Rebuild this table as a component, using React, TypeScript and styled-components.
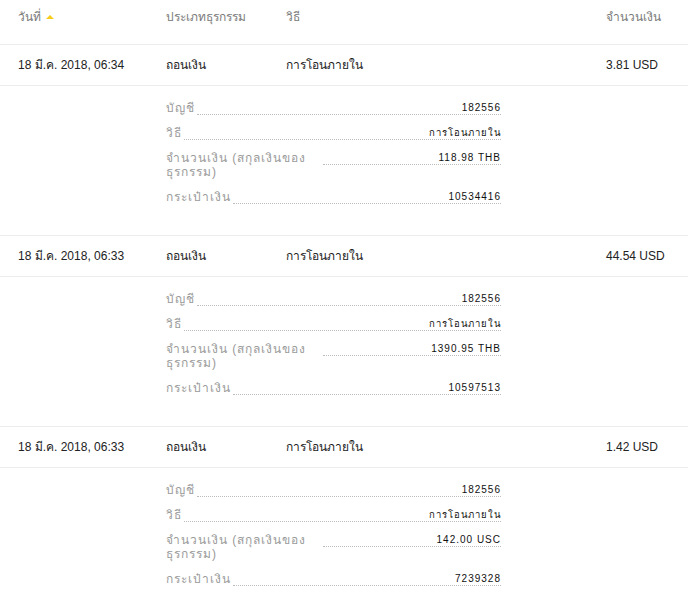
import React from "react";
import styled, { createGlobalStyle } from "styled-components";

const Global = createGlobalStyle`
  html, body { margin: 0; padding: 0; background: #fff; }
  body { font-family: "Liberation Sans", Arial, sans-serif; }
`;

const Table = styled.div`
  width: 688px;
  background: #fff;
`;

const Grid = styled.div`
  display: grid;
  grid-template-columns: 148px 120px 320px 1fr;
  padding-left: 18px;
  border-bottom: 1px solid #ececec;
  box-sizing: border-box;
`;

const HeaderRow = styled(Grid)`
  height: 45px;
  padding-top: 10px;
  align-items: start;
`;

const HeadCell = styled.div`
  font-size: 12px;
  line-height: 14px;
  color: #7a7a7a;
  display: flex;
  align-items: center;
  gap: 5px;
`;

const SortArrow = styled.span`
  width: 0;
  height: 0;
  border-left: 4px solid transparent;
  border-right: 4px solid transparent;
  border-bottom: 4px solid #f7cc1a;
  margin-top: -1px;
`;

const MainRow = styled(Grid)`
  height: 41px;
  align-items: center;
`;

const Cell = styled.div`
  font-size: 12px;
  line-height: 14px;
  color: #222;
`;

const Details = styled.div`
  border-bottom: 1px solid #ececec;
  padding: 15px 0 31px 166px;
`;

const DetailList = styled.div`
  width: 335px;
  display: flex;
  flex-direction: column;
  gap: 11px;
`;

const DetailRow = styled.div`
  display: flex;
  align-items: flex-start;
  gap: 2px;
`;

const Label = styled.div`
  max-width: 155px;
  font-size: 12px;
  line-height: 14px;
  letter-spacing: 1px;
  color: #9a9a9a;
`;

const Leader = styled.div<{ $thai?: boolean }>`
  flex: 1;
  height: 14px;
  box-sizing: border-box;
  border-bottom: 1px dotted #bdbdbd;
  text-align: right;
  font-size: ${(p) => (p.$thai ? "9.5px" : "10px")};
  line-height: 13px;
  letter-spacing: 1px;
  color: #111;
  white-space: nowrap;
`;

type Tx = {
  date: string;
  amount: string;
  account: string;
  original: string;
  wallet: string;
};

const data: Tx[] = [
  { date: "18 มี.ค. 2018, 06:34", amount: "3.81 USD", account: "182556", original: "118.98 THB", wallet: "10534416" },
  { date: "18 มี.ค. 2018, 06:33", amount: "44.54 USD", account: "182556", original: "1390.95 THB", wallet: "10597513" },
  { date: "18 มี.ค. 2018, 06:33", amount: "1.42 USD", account: "182556", original: "142.00 USC", wallet: "7239328" },
];

function Detail({ label, value, thai }: { label: string; value: string; thai?: boolean }) {
  return (
    <DetailRow>
      <Label>{label}</Label>
      <Leader $thai={thai}>{value}</Leader>
    </DetailRow>
  );
}

export default function App() {
  return (
    <Table>
      <Global />
      <HeaderRow>
        <HeadCell>
          วันที่ <SortArrow />
        </HeadCell>
        <HeadCell>ประเภทธุรกรรม</HeadCell>
        <HeadCell>วิธี</HeadCell>
        <HeadCell>จำนวนเงิน</HeadCell>
      </HeaderRow>
      {data.map((t, i) => (
        <React.Fragment key={i}>
          <MainRow>
            <Cell>{t.date}</Cell>
            <Cell>ถอนเงิน</Cell>
            <Cell>การโอนภายใน</Cell>
            <Cell>{t.amount}</Cell>
          </MainRow>
          <Details>
            <DetailList>
              <Detail label="บัญชี" value={t.account} />
              <Detail label="วิธี" value="การโอนภายใน" thai />
              <Detail label="จำนวนเงิน (สกุลเงินของธุรกรรม)" value={t.original} />
              <Detail label="กระเป๋าเงิน" value={t.wallet} />
            </DetailList>
          </Details>
        </React.Fragment>
      ))}
    </Table>
  );
}
